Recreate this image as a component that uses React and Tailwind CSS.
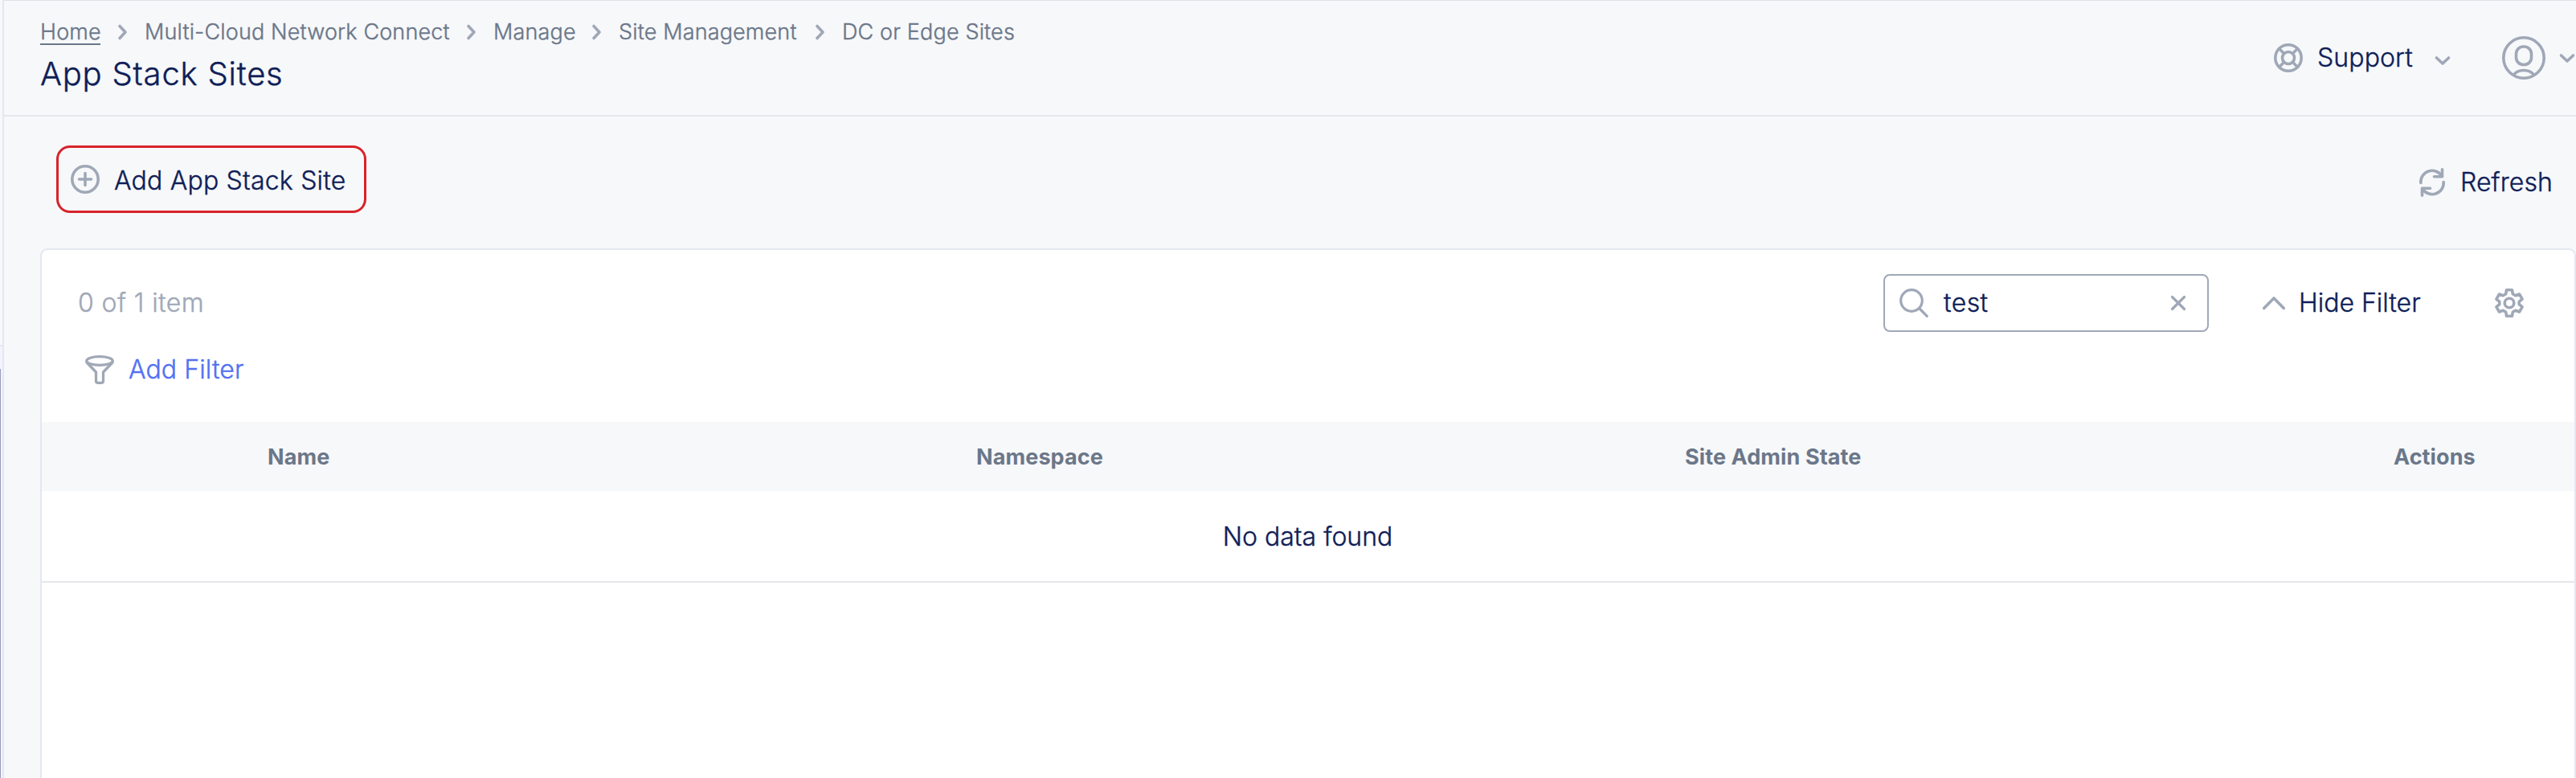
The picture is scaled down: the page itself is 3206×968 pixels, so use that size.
const Icon = ({ className, w, h, sw = 3.6, children }) => (
  <svg
    className={`block shrink-0 overflow-visible text-[#a0a8b7] ${className || ''}`}
    width={w}
    height={h}
    viewBox={`0 0 ${w} ${h}`}
    fill="none"
    stroke="currentColor"
    strokeWidth={sw}
    strokeLinecap="round"
    strokeLinejoin="round"
  >
    {children}
  </svg>
);

const ChevronRight = () => (
  <Icon w={11} h={18} className="mx-[22px]">
    <path d="M2 1.500 9 9l-7 7.500" />
  </Icon>
);

const ChevronDown = ({ className }) => (
  <Icon w={18} h={11} className={className}>
    <path d="M1.500 2 9 9l7.500-7" />
  </Icon>
);

const crumbs = [
  { label: 'Multi-Cloud Network Connect', cls: 'w-[379px]' },
  { label: 'Manage', cls: 'w-[101px]' },
  { label: 'Site Management', cls: 'w-[223px]' },
  { label: 'DC or Edge Sites', cls: 'w-[216px]' },
];

function Header() {
  return (
    <header className="flex h-[145px] items-start border-b-2 border-[#e5e7eb] pl-[45px]">
      <div className="flex grow flex-col">
        <nav className="flex h-[56px] items-start whitespace-nowrap pt-[22px] text-[27px] leading-[34px] tracking-[0.15px] text-[#6b7789]">
          <span className="h-[34px] w-[75px] border-b-2 border-[#6b7789] leading-[36px]">Home</span>
          {crumbs.map((c) => (
            <span key={c.label} className="flex h-[36px] items-center">
              <ChevronRight />
              <span className={c.cls}>{c.label}</span>
            </span>
          ))}
        </nav>
        <h1 className="pt-[12px] text-[40px] leading-[48px] tracking-[0.8px]">App Stack Sites</h1>
      </div>
      <div className="flex h-[144px] shrink-0 items-center text-[32px]">
        <Icon w={36} h={36}>
          <circle cx="18" cy="18" r="16.200" />
          <circle cx="18" cy="18" r="7.500" />
          <path d="m6.500 6.500 6 6m11 11 6 6m0-23-6 6m-11 11-6 6" />
        </Icon>
        <span className="ml-[18px] w-[147px] tracking-[0.1px]">Support</span>
        <ChevronDown className="mt-[6px]" />
        <Icon w={54} h={54} className="ml-[65px]">
          <circle cx="27" cy="27" r="25.200" />
          <rect x="17.500" y="13" width="19" height="22.500" rx="9" />
          <path d="M14.500 48c3-4 6-5.500 12.500-5.500s9.500 1.500 12.500 5.500" />
        </Icon>
        <ChevronDown className="ml-[18px] mr-[2px]" />
      </div>
    </header>
  );
}

function Toolbar() {
  return (
    <div className="flex h-[164px] items-start pl-[65px] pr-[28px] pt-[36px] text-[32px]">
      <button className="flex h-[84px] w-[386px] items-center whitespace-nowrap rounded-[17px] border-[3px] border-[#d8232a] pl-[15px]">
        <Icon w={36} h={36}>
          <circle cx="18" cy="18" r="16.200" />
          <path d="M18 10.500v15M10.500 18h15" />
        </Icon>
        <span className="ml-[18px] pt-[3px] tracking-[0.2px]">Add App Stack Site</span>
      </button>
      <button className="ml-auto flex h-[92px] items-center">
        <Icon w={32} h={36}>
          <path d="M1.800 18.500A14.200 14.200 0 0 1 28 10M28.500 1.800v9H18.500M30.200 17.500A14.200 14.200 0 0 1 4 26M3.500 34.200v-9h10" />
        </Icon>
        <span className="ml-[19px] w-[116px] text-left tracking-[0.1px]">Refresh</span>
      </button>
    </div>
  );
}

function SearchBar() {
  return (
    <div className="flex h-[72px] w-[405px] items-center rounded-[8px] border-2 border-[#a0a8b7] bg-white pl-[18px]">
      <Icon w={36} h={36} sw={3.2}>
        <circle cx="15" cy="15" r="13.300" />
        <path d="m24.500 24.500 9.800 9.800" />
      </Icon>
      <span className="ml-[19px] w-[283px] tracking-[0.4px]">test</span>
      <Icon w={18} h={18} sw={3.2}>
        <path d="m1.500 1.500 15 15m0-15-15 15" />
      </Icon>
    </div>
  );
}

export default function App() {
  return (
    <div className="flex h-[968px] w-[3206px] overflow-hidden bg-[#f7f8fa] font-['Inter',sans-serif] font-light text-[#0f1e57] [-webkit-text-stroke:0.4px]">
      <aside className="flex w-[5px] shrink-0 flex-col border-r-2 border-[#e5e7f0]">
        <div className="h-[431px] border-b-2 border-[#e5e7eb]" />
        <div className="h-[28px] bg-[#f1f4fc]" />
        <div className="grow border-l border-[#9a9db8] bg-[#f1f4fc]" />
      </aside>
      <div className="flex grow flex-col border-t border-[#dfe1e6]">
        <div className="-mt-px">
          <Header />
          <Toolbar />
        </div>
        <main className="ml-[45px] h-[680px] w-[3156px] rounded-t-[9px] border-2 border-b-0 border-[#e5e7f0] bg-white text-[32px]">
          <div className="flex items-center pl-[45px] pt-[30px]">
            <span className="grow tracking-[0.4px] text-[#a0a8b7]">0 of 1 item</span>
            <SearchBar />
            <Icon w={28} h={16} className="ml-[67px]">
              <path d="M1.700 14.500 14 2l12.300 12.500" />
            </Icon>
            <span className="ml-[17px] w-[244px]">Hide Filter</span>
            <Icon w={36} h={36} className="mr-[63px]">
              <path d="M14.500 1.800h7l.8 5 3.400 2 4.800-1.800 3.600 6.100-3.900 3.200v3.400l3.900 3.200-3.600 6.100-4.800-1.800-3.400 2-.8 5h-7l-.8-5-3.400-2-4.800 1.800-3.600-6.100 3.900-3.200v-3.400l-3.900-3.200 3.600-6.100 4.800 1.800 3.400-2z" />
              <circle cx="18" cy="18" r="5.800" />
            </Icon>
          </div>
          <div className="flex h-[112px] items-start pl-[54px] pt-[29px]">
            <Icon w={36} h={36} sw={3.3}>
              <ellipse cx="18" cy="7" rx="16.300" ry="5.300" />
              <path d="m2 9 11.500 12v11q0 2.300 2.500 2.300h4q2.500 0 2.500-2.300v-11l11.500-12" />
            </Icon>
            <span className="ml-[18px] leading-[36px] tracking-[0.1px] text-[#5271f2]">Add Filter</span>
          </div>
          <div className="grid h-[86px] grid-cols-[882px_882px_882px_1fr] items-center bg-[#f7f8fa] pl-[281px] pt-[2px] text-[27px] font-bold tracking-[0.1px] text-[#6b7789] [-webkit-text-stroke:0px]">
            <span>Name</span>
            <span>Namespace</span>
            <span>Site Admin State</span>
            <span>Actions</span>
          </div>
          <div className="flex h-[114px] items-center justify-center border-b-2 border-[#e5e7eb] pr-px pt-[2px]">No data found</div>
        </main>
      </div>
    </div>
  );
}
